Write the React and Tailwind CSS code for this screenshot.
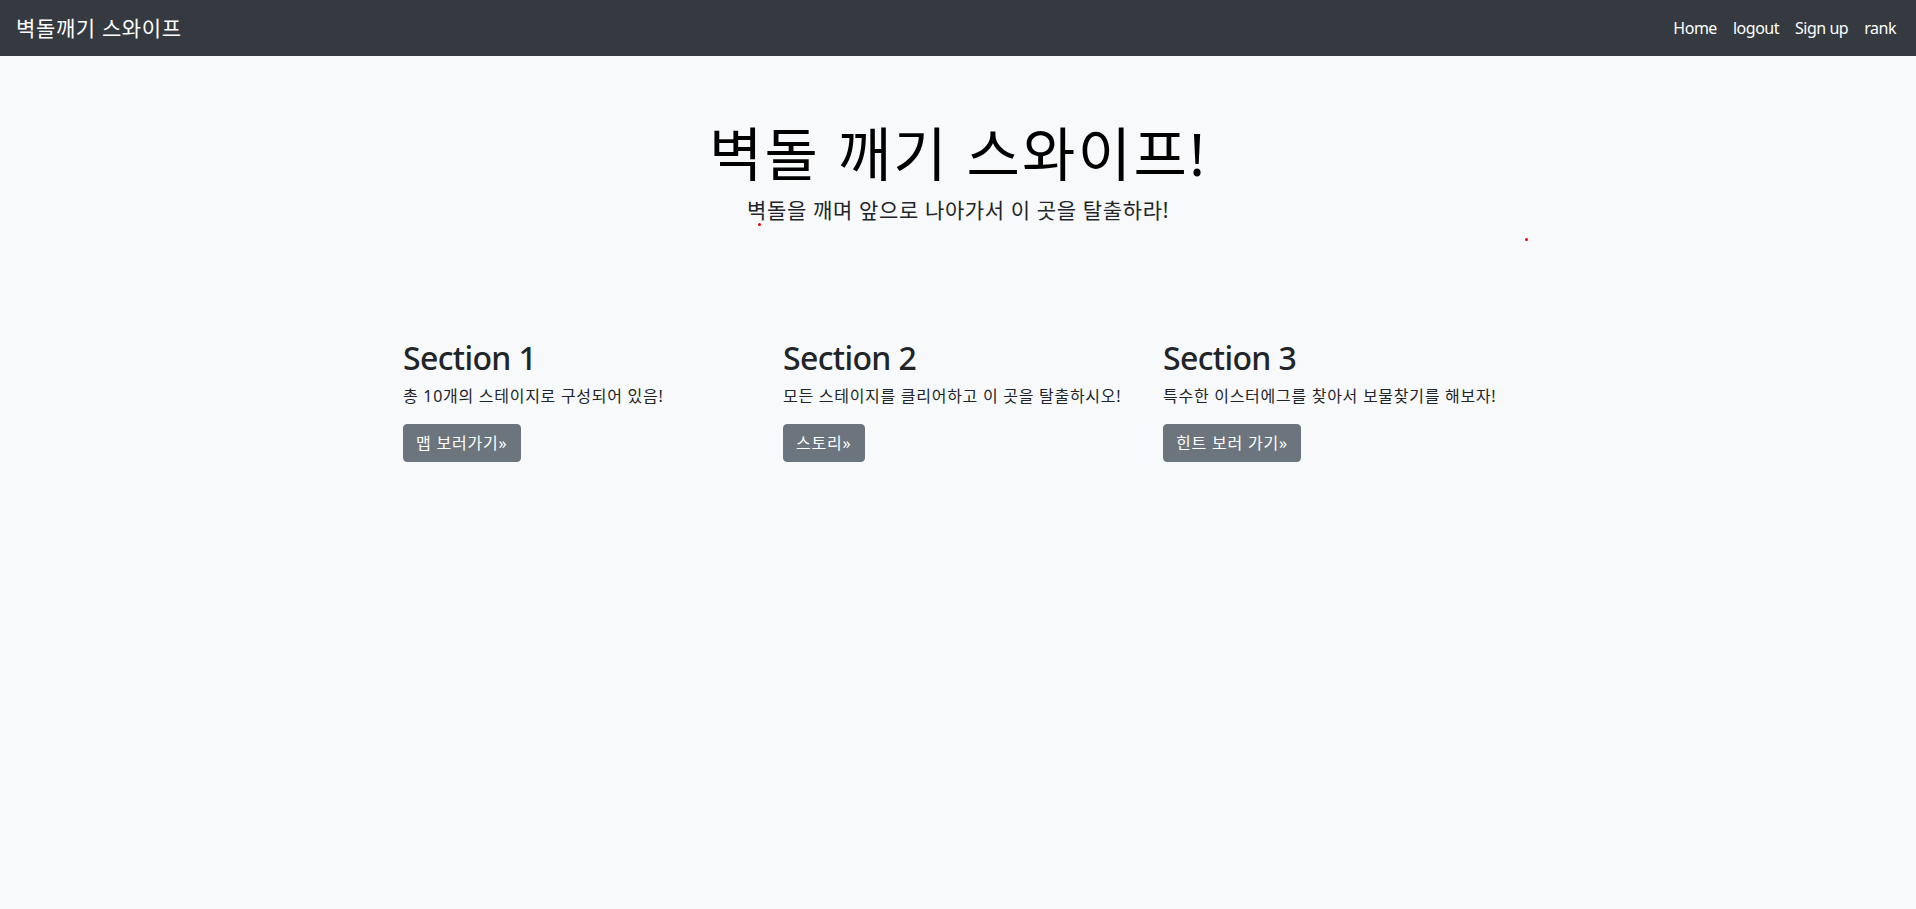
const sections = [
  { title: 'Section 1', text: '총 10개의 스테이지로 구성되어 있음!', button: '맵 보러가기»' },
  { title: 'Section 2', text: '모든 스테이지를 클리어하고 이 곳을 탈출하시오!', button: '스토리»' },
  { title: 'Section 3', text: '특수한 이스터에그를 찾아서 보물찾기를 해보자!', button: '힌트 보러 가기»' },
];

const font = { fontFamily: '"Noto Sans", "Noto Sans CJK KR", sans-serif' };

const App = () => {
  return (
    <div className="relative min-h-[909px] bg-[#f8f9fa] text-[#212529]" style={font}>
      <nav className="flex h-14 items-center justify-between bg-[#343a40] pl-4 pr-3">
        <a href="#" className="py-[5px] text-[21px] leading-[30px] tracking-[0.03em] text-white">벽돌깨기 스와이프</a>
        <div className="flex tracking-[-0.03em]">
          <a href="#" className="px-2 py-2 text-base text-white">Home</a>
          <a href="#" className="px-2 py-2 text-base text-white">logout</a>
          <a href="#" className="px-2 py-2 text-base text-white">Sign up</a>
          <a href="#" className="px-2 py-2 text-base text-white">rank</a>
        </div>
      </nav>

      <div className="mb-8 px-8 py-16 text-center">
        <h1 className="mb-2 text-[58px] font-normal leading-[67px] tracking-[0.04em] text-black">벽돌 깨기 스와이프!</h1>
        <p className="mb-4 text-[21px] leading-[30px] tracking-[0.03em]">벽돌을 깨며 앞으로 나아가서 이 곳을 탈출하라!</p>
      </div>

      <div className="mx-auto grid w-[1140px] grid-cols-3">
        {sections.map((s) => (
          <div key={s.title} className="px-[15px]">
            <h2 className="mb-[7px] pt-[2px] text-[32px] font-medium leading-[1.2] tracking-[-0.02em]">{s.title}</h2>
            <p className="mb-4 text-base leading-6 tracking-[0.045em]">{s.text}</p>
            <a href="#" className="inline-block rounded border border-[#6c757d] bg-[#6c757d] px-3 py-1.5 text-base leading-6 tracking-[0.05em] text-white">{s.button}</a>
          </div>
        ))}
      </div>

      <span className="absolute left-[758px] top-[223px] h-[3px] w-[3px] rounded-full bg-red-600"></span>
      <span className="absolute left-[1525px] top-[238px] h-[3px] w-[3px] rounded-full bg-red-600"></span>
    </div>
  );
};

export default App;
